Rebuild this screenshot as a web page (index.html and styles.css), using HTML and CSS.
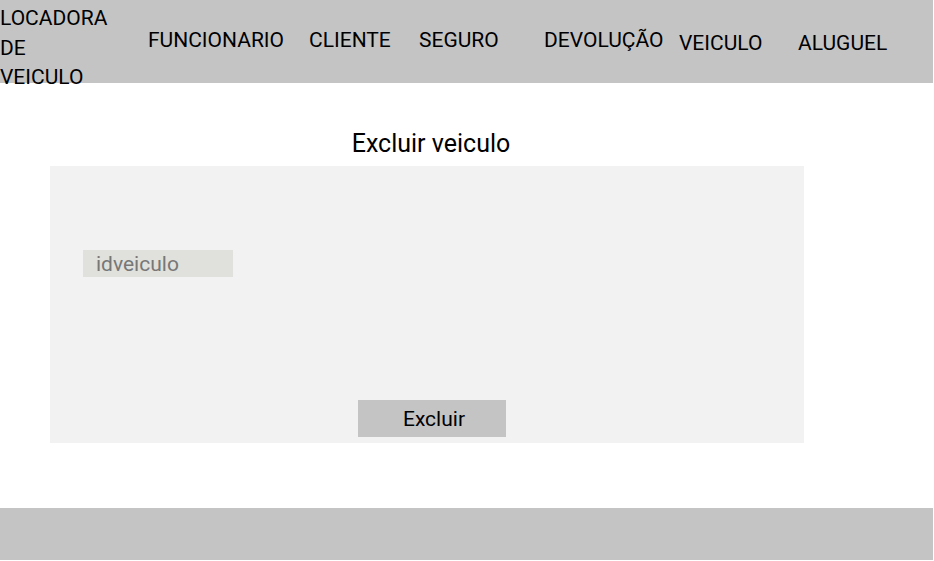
FILE: index.html
```html
<!DOCTYPE html>
<html lang="pt-BR">
<head>
<meta charset="utf-8">
<title>Excluir veiculo</title>
<link rel="stylesheet" href="styles.css">
</head>
<body>
<header class="topbar">
  <div class="brand">LOCADORA<br>DE<br>VEICULO</div>
  <nav class="nav">
    <a class="nav-item w-func">FUNCIONARIO</a>
    <a class="nav-item w-cli">CLIENTE</a>
    <a class="nav-item w-seg">SEGURO</a>
    <a class="nav-item w-dev">DEVOLUÇÃO</a>
    <a class="nav-item w-vei low">VEICULO</a>
    <a class="nav-item low">ALUGUEL</a>
  </nav>
</header>
<main class="main">
  <h1 class="title">Excluir veiculo</h1>
  <form class="panel">
    <input class="field" type="text" placeholder="idveiculo">
    <div class="actions">
      <button class="btn" type="button">Excluir</button>
    </div>
  </form>
</main>
<footer class="footer"></footer>
</body>
</html>
```
FILE: styles.css
```css
* { box-sizing: border-box; }
html, body { margin: 0; padding: 0; }
body {
  width: 934px;
  height: 561px;
  background: #ffffff;
  font-family: Roboto, "Liberation Sans", sans-serif;
  color: #000;
  overflow: hidden;
}
.topbar {
  width: 933px;
  height: 83px;
  background: #c4c4c4;
  display: flex;
}
.brand {
  width: 148px;
  font-size: 21px;
  line-height: 29.5px;
  padding-top: 4px;
  height: 83px;
}
.nav {
  display: flex;
  align-items: flex-start;
  padding-top: 29px;
}
.nav-item {
  font-size: 21px;
  line-height: 23px;
  white-space: nowrap;
}
.w-func { width: 161px; }
.w-cli { width: 110px; }
.w-seg { width: 125px; }
.w-dev { width: 135px; }
.w-vei { width: 119px; }
.low { margin-top: 3px; }
.main {
  padding: 0 0 0 50px;
  width: 804px;
}
.title {
  margin: 0;
  padding: 46px 0 0 8px;
  height: 83px;
  text-align: center;
  font-size: 25px;
  font-weight: 400;
  line-height: 29px;
}
.panel {
  background: #f2f2f2;
  height: 277px;
  padding: 84px 0 0 33px;
  display: flex;
  flex-direction: column;
  align-items: flex-start;
}
.field {
  width: 150px;
  height: 27px;
  border: 0;
  background: #e0e0dc;
  padding: 0 0 0 13px;
  font-family: inherit;
  font-size: 21px;
  color: #777;
  outline: none;
}
.field::placeholder { color: #777; }
.actions {
  margin-top: 123px;
  padding-left: 275px;
}
.btn {
  width: 148px;
  height: 37px;
  border: 0;
  background: #c4c4c4;
  font-family: inherit;
  font-size: 21px;
  color: #000;
  padding: 0 0 0 4px;
}
.footer {
  margin-top: 65px;
  width: 933px;
  height: 52px;
  background: #c4c4c4;
}
```
